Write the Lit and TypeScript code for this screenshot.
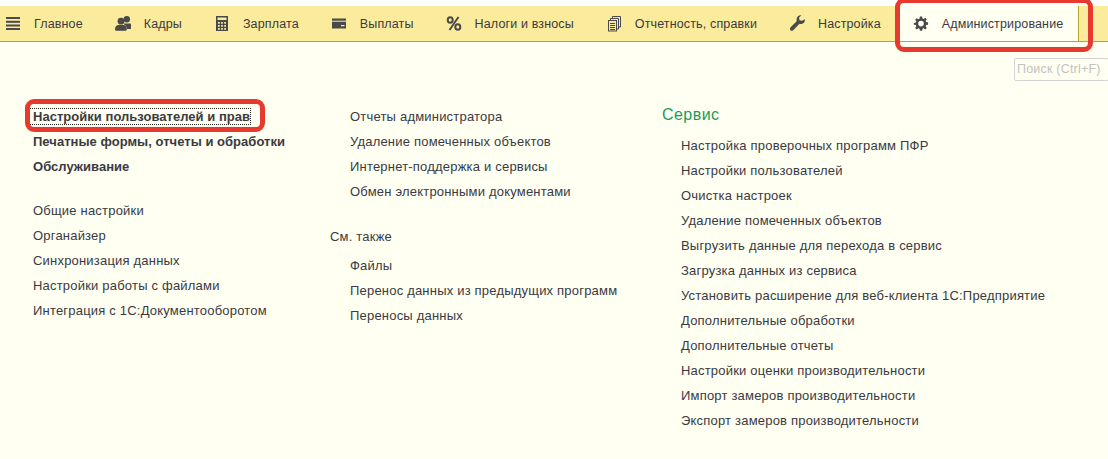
import { LitElement, html, css, svg } from "lit";
import { customElement } from "lit/decorators.js";

const icons: Record<string, unknown> = {
  menu: svg`<rect x="1" y="2" width="14" height="2"/><rect x="1" y="5.800" width="14" height="2"/><rect x="1" y="9.500" width="14" height="2"/><rect x="1" y="13" width="14" height="2"/>`,
  people: svg`<circle cx="11.800" cy="4.200" r="3.200"/><path d="M9 8.500h5.500c1.600 0 2.800 1.200 2.800 2.800V14h-5.200c-.2-2-1.200-3.600-3-4.600z"/><circle cx="6" cy="6.200" r="3.400"/><path d="M0 14.500c0-2.800 1.600-4.400 3.500-4.400h5c2 0 3.300 1.800 3.300 4.400 0 .8-.4 1.200-1.200 1.200H1.200C.4 15.700 0 15.300 0 14.500z"/>`,
  calc: svg`<path fill-rule="evenodd" d="M2 1h12v15H2zM3.500 2.500v2.500h9V2.500zM4 7v1.800h1.800V7zm3.100 0v1.800h1.800V7zm3.100 0v1.800H12V7zM4 10v1.800h1.800V10zm3.100 0v1.800h1.800V10zm3.100 0v1.800H12V10zM4 13v1.800h1.800V13zm3.100 0v1.800h1.800V13zm3.100 0v1.800H12V13z"/>`,
  card: svg`<path fill-rule="evenodd" d="M1 3.500h14v10H1zM10 10v1.200h3.500V10z"/><rect x="1" y="5.700" width="14" height="1" fill="#fbeb9c"/>`,
  pct: svg`<g fill="none" stroke-width="2"><ellipse cx="4.200" cy="5" rx="2.500" ry="2.800"/><ellipse cx="11.800" cy="12" rx="2.500" ry="2.800"/><path d="M12.500 2 3.500 15"/></g>`,
  docs: svg`<g fill="none" stroke-width="1"><rect x="2.500" y="5.500" width="8" height="10.500"/><path d="M4.500 5.500V3.500h8v10.500h-2M6.500 3.500V1.500h8V12h-2"/><path d="M4 8.500h5M4 10.500h5M4 12.500h5M4 14.500h5"/></g>`,
  wrench: svg`<path d="M15.800 4.200c.5 2.300-1 4.600-3.400 4.800-.7.100-1.300 0-1.900-.3l-6.300 6.500c-.8.800-2 .8-2.700.1s-.7-2-.1-2.800l6.500-6.400c-.3-.6-.4-1.300-.3-2C7.800 1.400 10 0 12.400.3l-2.300 2.300.4 2.700 2.700.5z"/>`,
  gear: svg`<path fill-rule="evenodd" d="M6.900 1.500h2.200l.4 1.900 1.200.5 1.600-1.100 1.500 1.500-1.100 1.600.5 1.200 1.900.4v2.200l-1.900.4-.5 1.200 1.100 1.600-1.500 1.500-1.600-1.100-1.200.5-.4 1.900H6.900l-.4-1.900-1.200-.5-1.600 1.100-1.500-1.500 1.100-1.600-.5-1.200-1.900-.4V7.900l1.900-.4.500-1.200-1.100-1.600 1.500-1.500 1.600 1.100 1.200-.5zM8 5.800a2.800 2.800 0 1 0 0 5.600 2.800 2.800 0 0 0 0-5.600z"/>`,
};

const tabs = [
  { icon: "menu", label: "Главное" },
  { icon: "people", label: "Кадры" },
  { icon: "calc", label: "Зарплата" },
  { icon: "card", label: "Выплаты" },
  { icon: "pct", label: "Налоги и взносы" },
  { icon: "docs", label: "Отчетность, справки" },
  { icon: "wrench", label: "Настройка" },
];

@customElement("app-root")
export class AppRoot extends LitElement {
  static styles = css`
    :host {
      display: block;
      position: relative;
      width: 1108px;
      height: 459px;
      overflow: hidden;
      background: #fffff2;
      font-family: "Liberation Sans", Arial, sans-serif;
      font-size: 13px;
      letter-spacing: 0.2px;
      color: #3a3a42;
    }
    .top { height: 6px; background: #fff; }
    .bar {
      height: 35px;
      display: flex;
      background: #fbeb9c;
      border-bottom: 1px solid #b8a52a;
      padding-left: 4px;
      font-size: 12.5px;
      letter-spacing: 0.14px;
    }
    .tab { display: flex; align-items: center; white-space: nowrap; margin-right: 31px; }
    .tab svg { width: 16px; height: 17px; margin: 0 13px 0 1px; fill: #4a4a4a; stroke: #4a4a4a; stroke-width: 0; flex: none; }
    .tab.active {
      margin: 0 0 0 -13px;
      box-sizing: border-box;
      padding: 0 15px 0 13px;
      background: #fffff2;
      border-right: 1px solid #b8a52a;
    }
    .search-row { display: flex; justify-content: flex-end; padding-top: 16px; margin-right: -1px; }
    .search {
      width: 95px;
      height: 23px;
      box-sizing: border-box;
      border: 1px solid #d4d4d4;
      border-radius: 2px;
      padding-left: 2px;
      line-height: 21px;
      font-size: 12.5px;
      letter-spacing: 0.2px;
      color: #c2c2c2;
    }
    .cols { display: flex; padding: 23px 0 0 33px; }
    .col1 { width: 297px; }
    .col2 { width: 332px; }
    .item { height: 25px; line-height: 25px; white-space: nowrap; }
    .item.b { font-weight: 700; letter-spacing: 0.03px; }
    .gap { height: 19px; }
    .focus { display: inline-block; line-height: 15px; outline: 1px dotted #222; margin-left: -3px; padding-left: 3px; }
    .in { padding-left: 20px; }
    .in3 { padding-left: 19px; }
    .sub { height: 20px; line-height: 20px; margin-top: 23px; margin-bottom: 6px; }
    .h { color: #1a9c5b; font-size: 16px; letter-spacing: 0.45px; line-height: 21px; height: 21px; margin: 0 0 8px 0; }
    .note {
      position: absolute;
      box-sizing: border-box;
      border: 5px solid #e8392e;
      border-radius: 9px;
      pointer-events: none;
    }
    .n1 { left: 25px; top: 99px; width: 240px; height: 33px; }
    .n2 { left: 895px; top: -2px; width: 198px; height: 54px; }
  `;

  private list(items: string[], cls = "") {
    return items.map((t) => html`<div class="item ${cls}">${t}</div>`);
  }

  render() {
    return html`
      <div class="top"></div>
      <div class="bar">
        ${tabs.map((t) => html`
          <div class="tab">
            <svg viewBox="0 0 16 17">${icons[t.icon]}</svg>${t.label}
          </div>`)}
        <div class="tab active">
          <svg viewBox="0 0 16 17">${icons.gear}</svg>Администрирование
        </div>
      </div>
      <div class="search-row"><div class="search">Поиск (Ctrl+F)</div></div>
      <div class="cols">
        <div class="col1">
          <div class="item b"><span class="focus">Настройки пользователей и прав</span></div>
          ${this.list(["Печатные формы, отчеты и обработки", "Обслуживание"], "b")}
          <div class="gap"></div>
          ${this.list(["Общие настройки", "Органайзер", "Синхронизация данных", "Настройки работы с файлами", "Интеграция с 1С:Документооборотом"])}
        </div>
        <div class="col2">
          <div class="in">
            ${this.list(["Отчеты администратора", "Удаление помеченных объектов", "Интернет-поддержка и сервисы", "Обмен электронными документами"])}
          </div>
          <div class="sub">См. также</div>
          <div class="in">
            ${this.list(["Файлы", "Перенос данных из предыдущих программ", "Переносы данных"])}
          </div>
        </div>
        <div class="col3">
          <div class="h">Сервис</div>
          <div class="in3">
            ${this.list(["Настройка проверочных программ ПФР", "Настройки пользователей", "Очистка настроек", "Удаление помеченных объектов", "Выгрузить данные для перехода в сервис", "Загрузка данных из сервиса", "Установить расширение для веб-клиента 1С:Предприятие", "Дополнительные обработки", "Дополнительные отчеты", "Настройки оценки производительности", "Импорт замеров производительности", "Экспорт замеров производительности"])}
          </div>
        </div>
      </div>
      <div class="note n1"></div>
      <div class="note n2"></div>
    `;
  }
}
